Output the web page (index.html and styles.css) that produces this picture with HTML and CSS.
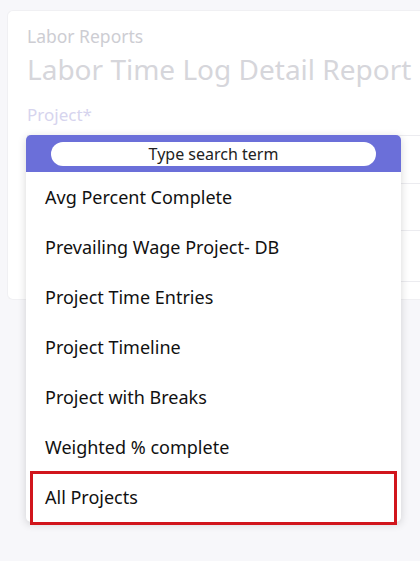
FILE: index.html
```html
<!DOCTYPE html>
<html lang="en">
<head>
<meta charset="utf-8">
<title>Labor Time Log Detail Report</title>
<link rel="stylesheet" href="styles.css">
</head>
<body>
<div class="card">
  <div class="crumb">Labor Reports</div>
  <h1 class="title">Labor Time Log Detail Report</h1>
  <div class="label">Project*</div>
  <div class="fields">
    <div class="field f1"></div>
    <div class="field f2"></div>
    <div class="field f3"></div>
  </div>
</div>
<div class="dropdown">
  <div class="dd-head">
    <div class="search">Type search term</div>
  </div>
  <ul class="list">
    <li class="item">Avg Percent Complete</li>
    <li class="item">Prevailing Wage Project- DB</li>
    <li class="item">Project Time Entries</li>
    <li class="item">Project Timeline</li>
    <li class="item">Project with Breaks</li>
    <li class="item">Weighted % complete</li>
    <li class="item highlight">All Projects</li>
  </ul>
</div>
</body>
</html>
```
FILE: styles.css
```css
html, body {
  margin: 0;
  padding: 0;
}
body {
  background: #f7f7fa;
  font-family: "Noto Sans", "Open Sans", sans-serif;
  width: 420px;
  height: 561px;
  overflow: hidden;
  position: relative;
}
.card {
  margin: 10px 0 0 7px;
  background: #ffffff;
  border: 1px solid #f0f0f3;
  border-right: none;
  border-radius: 6px 0 0 6px;
  padding: 14px 0 17px 19px;
}
.crumb {
  font-size: 17.5px;
  line-height: 22px;
  color: #cdcdd3;
}
.title {
  margin: 2px 0 0 0;
  font-weight: 400;
  font-size: 28px;
  line-height: 40px;
  color: #d6d6db;
  white-space: nowrap;
}
.label {
  margin-top: 15px;
  font-size: 17px;
  line-height: 22px;
  color: #d6d4ee;
}
.fields {
  margin-top: 9px;
  display: flex;
  flex-direction: column;
}
.field {
  border-top: 1px solid #ececf0;
  border-left: 1px solid #ececf0;
}
.f1 { height: 47px; }
.f2 { height: 46px; }
.f3 { height: 50px; border-bottom: 1px solid #ececf0; }

.dropdown {
  position: absolute;
  left: 26px;
  top: 135px;
  width: 375px;
  background: #ffffff;
  border-radius: 5px;
  box-shadow: 0 2px 8px rgba(0, 0, 0, 0.16);
}
.dd-head {
  height: 37px;
  background: #6b6fd9;
  border-radius: 5px 5px 0 0;
  display: flex;
  align-items: center;
  justify-content: center;
}
.search {
  width: 325px;
  height: 24px;
  background: #ffffff;
  border-radius: 12px;
  font-size: 16px;
  line-height: 24px;
  text-align: center;
  color: #222222;
}
.list {
  list-style: none;
  margin: 0;
  padding: 0;
}
.item {
  height: 50px;
  line-height: 50px;
  padding-left: 19px;
  font-size: 18px;
  color: #111111;
}
.highlight {
  position: relative;
}
.highlight::after {
  content: "";
  position: absolute;
  left: 4px;
  right: 4px;
  top: -1px;
  bottom: -3px;
  border: 3px solid #d1151c;
}
```
